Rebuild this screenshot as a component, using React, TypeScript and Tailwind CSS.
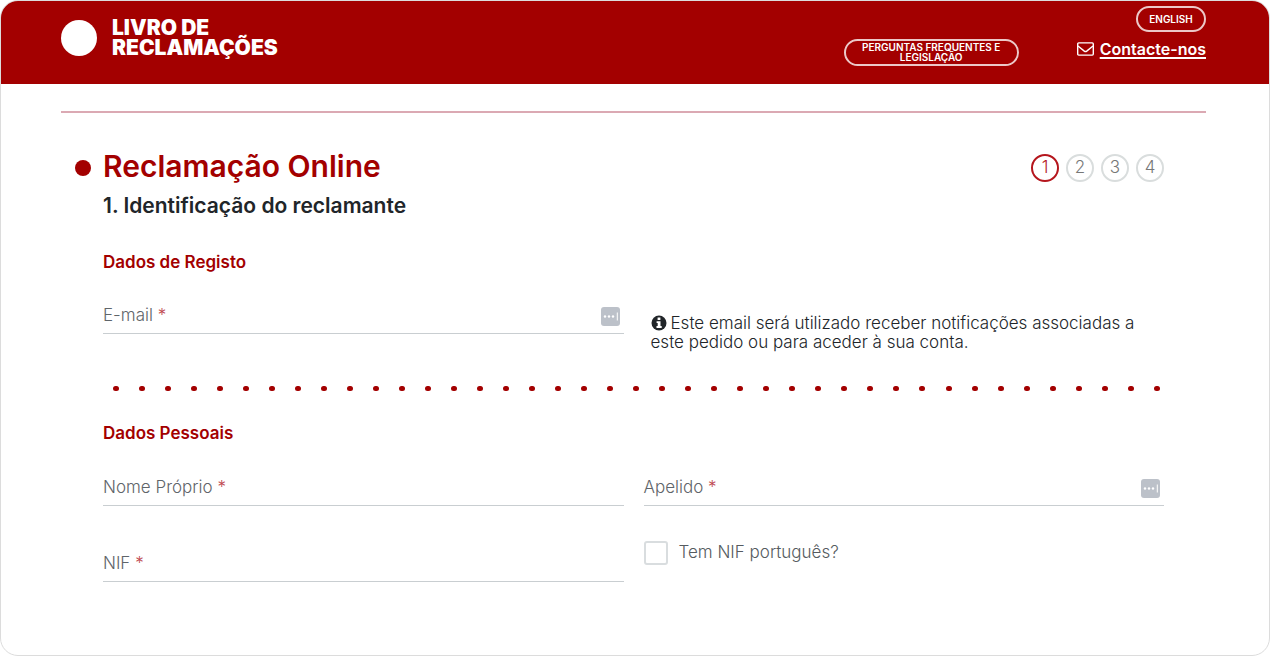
import type { ReactNode } from "react";

const steps = [1, 2, 3, 4];

function AutofillIcon() {
  return (
    <svg viewBox="0 0 19 19" className="h-[19px] w-[19px] shrink-0" aria-hidden="true">
      <rect width="19" height="19" rx="3" fill="#bcc1c9" />
      <circle cx="4" cy="9.5" r="1.2" fill="#fff" />
      <circle cx="8" cy="9.5" r="1.2" fill="#fff" />
      <circle cx="12" cy="9.5" r="1.2" fill="#fff" />
      <path d="M16.3 5.5v8" stroke="#fff" strokeWidth="1" />
    </svg>
  );
}

function InfoIcon() {
  return (
    <svg viewBox="0 0 16 16" className="mr-1 inline-block h-4 w-4 align-[-2px]" aria-hidden="true">
      <circle cx="8" cy="8" r="7.5" fill="#212529" />
      <path d="M6.6 2.6h2.8v2.4H6.6zM5.6 6.2h3.9v4.8h1.2v1.9H5.5V11h1.2V8.1H5.6z" fill="#fff" />
    </svg>
  );
}

function MailIcon() {
  return (
    <svg viewBox="0 0 17 14" className="h-[14px] w-[17px]" fill="none" stroke="#fff" strokeWidth="1.4" aria-hidden="true">
      <rect x="0.7" y="0.9" width="15.6" height="12.2" rx="1" />
      <path d="M1 4 7.3 9.1q1.2.9 2.4 0L16 4" />
    </svg>
  );
}

type FieldProps = {
  id: string;
  label: string;
  type?: string;
  children?: ReactNode;
};

function Field({ id, label, type = "text", children }: FieldProps) {
  return (
    <div className="flex h-9 items-center border-b border-[#c9ced1] pt-px pr-1">
      <label htmlFor={id} className="text-[#5f656a]">
        {label} <span className="text-[#c04a52]">*</span>
      </label>
      <input id={id} type={type} required className="min-w-0 flex-1 bg-transparent px-2 outline-none" />
      {children}
    </div>
  );
}

function DottedLine() {
  return (
    <div className="mt-[34px] flex justify-between pr-1 pl-[10px]">
      {Array.from({ length: 41 }, (_, i) => (
        <span key={i} className="h-[5px] w-[6px] rounded-full bg-[#a30000]" />
      ))}
    </div>
  );
}

export default function App() {
  return (
    <div className="min-h-screen overflow-hidden rounded-[18px] border border-[#dcdcdc] bg-white font-['Inter','Liberation_Sans',sans-serif] text-[17px] font-light text-[#212529]">
      {/* Header */}
      <header className="flex items-start justify-between bg-[#a30000] pt-[5px] pr-[63px] pb-[18px] pl-[60px] text-white">
        <a href="#" className="mt-3 flex items-center gap-[15px]">
          <span className="h-9 w-9 rounded-full bg-white" />
          <span className="text-[21px] leading-5 font-black">
            LIVRO DE
            <br />
            RECLAMAÇÕES
          </span>
        </a>

        <div className="flex items-start gap-[58px]">
          <button className="mt-[33px] h-[27px] w-[175px] rounded-full border-2 border-[#ecc8c8] px-3 pb-px text-[10px] leading-[10px] font-semibold">
            PERGUNTAS FREQUENTES E LEGISLAÇÃO
          </button>
          <div className="flex flex-col items-end gap-[5px]">
            <button className="h-[26px] w-[70px] rounded-full border-2 border-[#ecc8c8] pb-px text-[10px] leading-[10px] font-semibold">
              ENGLISH
            </button>
            <a href="#" className="flex items-center gap-[6px] text-[16px] leading-6 font-semibold">
              <MailIcon />
              <span className="underline decoration-2 underline-offset-2">Contacte-nos</span>
            </a>
          </div>
        </div>
      </header>

      <main className="pr-[63px] pl-[60px]">
        <hr className="mt-[27px] h-0.5 border-0 bg-[#dba9b3]" />

        <form className="mt-[33px] pr-[42px] pb-10 pl-[42px]">
          <div className="flex items-center justify-between">
            <div className="-ml-7 flex items-center gap-3">
              <span className="mt-[3px] h-4 w-4 rounded-full bg-[#a30000]" />
              <h1 className="text-[30px] leading-10 font-semibold text-[#a30000]">Reclamação Online</h1>
            </div>
            <ol className="mt-1 flex gap-[7px]">
              {steps.map((step) => (
                <li
                  key={step}
                  className={
                    step === 1
                      ? "flex h-7 w-7 items-center justify-center rounded-full border-2 border-[#b5161d] text-[#b5161d]"
                      : "flex h-7 w-7 items-center justify-center rounded-full border-2 border-[#d9dddd] text-[#777]"
                  }
                >
                  {step}
                </li>
              ))}
            </ol>
          </div>
          <h2 className="mt-2 text-[21px] leading-6 font-semibold">1. Identificação do reclamante</h2>

          {/* Dados de Registo */}
          <h3 className="mt-8 text-[17px] leading-6 font-semibold text-[#a30000]">Dados de Registo</h3>
          <div className="mt-6 grid grid-cols-2 gap-x-5">
            <Field id="email" label="E-mail" type="email">
              <AutofillIcon />
            </Field>
            <p className="mt-4 pr-5 pl-[7px] leading-[19px]">
              <InfoIcon />
              Este email será utilizado receber notificações associadas a este pedido ou para aceder à sua conta.
            </p>
          </div>

          <DottedLine />

          {/* Dados Pessoais */}
          <h3 className="mt-[30px] text-[17px] leading-6 font-semibold text-[#a30000]">Dados Pessoais</h3>
          <div className="mt-[25px] grid grid-cols-2 gap-x-5">
            <Field id="nome" label="Nome Próprio" />
            <Field id="apelido" label="Apelido">
              <AutofillIcon />
            </Field>
          </div>
          <div className="mt-[35px] grid grid-cols-2 gap-x-5">
            <div className="pt-[5px]">
              <Field id="nif" label="NIF" />
            </div>
            <label className="flex h-6 items-center gap-[11px] text-[#555b60]">
              <input type="checkbox" className="h-6 w-6 appearance-none rounded-[3px] border-2 border-[#d9dddf] checked:bg-[#a30000]" />
              Tem NIF português?
            </label>
          </div>
        </form>
      </main>
    </div>
  );
}
